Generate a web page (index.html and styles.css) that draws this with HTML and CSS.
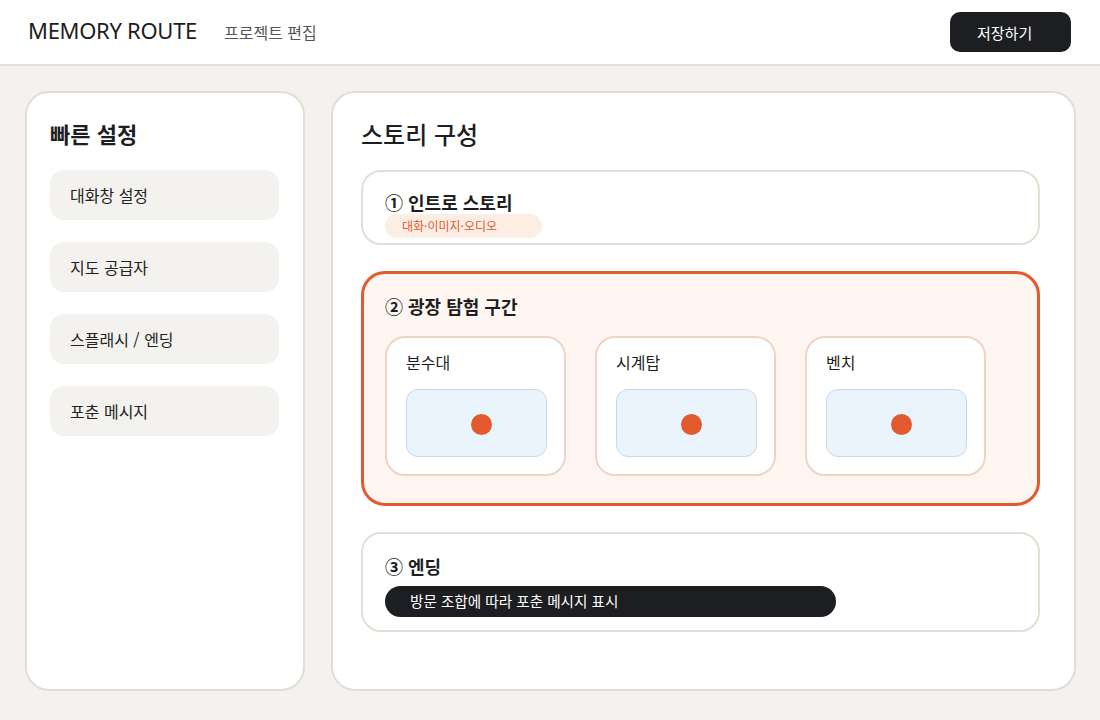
FILE: index.html
```html
<!DOCTYPE html>
<html lang="ko">
<head>
    <meta charset="UTF-8">
    <meta name="viewport" content="width=device-width, initial-scale=1.0">
    <title>Memory Route</title>
    <link rel="stylesheet" href="styles.css">
</head>
<body>
    <header class="topbar">
        <div class="brand">
            <span class="logo">MEMORY ROUTE</span>
            <span class="subtitle">프로젝트 편집</span>
        </div>
        <button class="save-btn">저장하기</button>
    </header>

    <main class="layout">
        <aside class="panel side">
            <h2 class="panel-title">빠른 설정</h2>
            <ul class="quick-list">
                <li>대화창 설정</li>
                <li>지도 공급자</li>
                <li>스플래시 / 엔딩</li>
                <li>포춘 메시지</li>
            </ul>
        </aside>

        <section class="panel story">
            <h2 class="panel-title big">스토리 구성</h2>

            <div class="block intro">
                <h3>① 인트로 스토리</h3>
                <span class="tag">대화·이미지·오디오</span>
            </div>

            <div class="block active">
                <h3>② 광장 탐험 구간</h3>
                <div class="spots">
                    <div class="spot">
                        <p>분수대</p>
                        <div class="mini-map"><span class="pin"></span></div>
                    </div>
                    <div class="spot">
                        <p>시계탑</p>
                        <div class="mini-map"><span class="pin"></span></div>
                    </div>
                    <div class="spot">
                        <p>벤치</p>
                        <div class="mini-map"><span class="pin"></span></div>
                    </div>
                </div>
            </div>

            <div class="block ending">
                <h3>③ 엔딩</h3>
                <div class="note">방문 조합에 따라 포춘 메시지 표시</div>
            </div>
        </section>
    </main>
</body>
</html>
```

FILE: styles.css
```css
* {
    box-sizing: border-box;
}
body {
    margin: 0;
    background-color: #f3f2ee;
    font-family: "Noto Sans", "Noto Sans CJK KR", sans-serif;
    color: #1d1e21;
    width: 1100px;
    height: 720px;
    overflow: hidden;
}
.topbar {
    height: 66px;
    background-color: white;
    border-bottom: 2px solid #e2ddd6;
    display: flex;
    align-items: center;
    justify-content: space-between;
    padding: 0 29px 0 28px;
}
.brand {
    display: flex;
    align-items: baseline;
    gap: 27px;
    margin-top: -4px;
}
.logo {
    font-size: 22px;
    letter-spacing: -0.3px;
}
.subtitle {
    font-family: "Noto Sans CJK KR", sans-serif;
    font-size: 16px;
    color: #55565a;
}
.save-btn {
    width: 121px;
    height: 40px;
    margin-top: 0;
    border: none;
    border-radius: 10px;
    background-color: #1d1e21;
    color: white;
    font-family: "Noto Sans CJK KR", sans-serif;
    font-size: 15px;
    text-align: left;
    padding-left: 27px;
    cursor: pointer;
}
.layout {
    display: flex;
    gap: 26px;
    padding: 25px 24px 0 25px;
}
.panel {
    background-color: white;
    border: 2px solid #e2ddd5;
    border-radius: 24px;
    height: 600px;
}
.side {
    width: 280px;
    padding: 24px 24px 0 23px;
}
.panel-title {
    font-family: "Noto Sans CJK KR", sans-serif;
    font-size: 22px;
    font-weight: 600;
    margin: 0 0 21px;
    line-height: 32px;
}
.panel-title.big {
    font-size: 24px;
    font-weight: 500;
    margin-bottom: 20px;
}
.quick-list {
    list-style: none;
    margin: 0;
    padding: 0;
    display: flex;
    flex-direction: column;
    gap: 22px;
}
.quick-list li {
    height: 50px;
    background-color: #f3f2ee;
    border-radius: 14px;
    padding: 0 20px;
    display: flex;
    align-items: center;
    font-family: "Noto Sans CJK KR", sans-serif;
    font-size: 16px;
    color: #222;
}
.story {
    flex: 1;
    padding: 25px 34px 0 28px;
}
.block {
    border: 2px solid #e6ded4;
    border-radius: 20px;
    margin-bottom: 26px;
    padding: 18px 22px 0;
}
.block h3 {
    font-family: "Noto Sans CJK KR", sans-serif;
    font-size: 18px;
    font-weight: 600;
    margin: 0;
    line-height: 24px;
}
.intro {
    height: 75px;
}
.tag {
    display: inline-block;
    width: 157px;
    height: 24px;
    line-height: 24px;
    border-radius: 12px;
    background-color: #fdeee5;
    color: #e05a2b;
    font-family: "Noto Sans CJK KR", sans-serif;
    font-size: 12px;
    padding-left: 17px;
}
.active {
    height: 235px;
    border: 3px solid #e35a2e;
    border-radius: 24px;
    background-color: #fff6f1;
    padding: 20px 21px 0;
}
.spots {
    display: flex;
    gap: 29px;
    margin-top: 18px;
}
.spot {
    width: 181px;
    height: 140px;
    background-color: white;
    border: 2px solid #efd4c4;
    border-radius: 20px;
    padding: 12px 19px 0;
}
.spot p {
    margin: 0;
    font-family: "Noto Sans CJK KR", sans-serif;
    font-size: 16px;
    line-height: 24px;
}
.mini-map {
    position: relative;
    margin-top: 15px;
    width: 141px;
    height: 68px;
    background-color: #e9f4fd;
    border: 1px solid #c9d8e6;
    border-radius: 12px;
}
.pin {
    position: absolute;
    left: 64px;
    top: 24px;
    width: 21px;
    height: 21px;
    border-radius: 50%;
    background-color: #e35a2e;
}
.ending {
    height: 100px;
    padding-top: 20px;
}
.note {
    margin-top: 8px;
    width: 451px;
    height: 31px;
    line-height: 30px;
    border-radius: 16px;
    background-color: #1d1e21;
    color: white;
    font-family: "Noto Sans CJK KR", sans-serif;
    font-size: 14.6px;
    padding-left: 25px;
}
```
